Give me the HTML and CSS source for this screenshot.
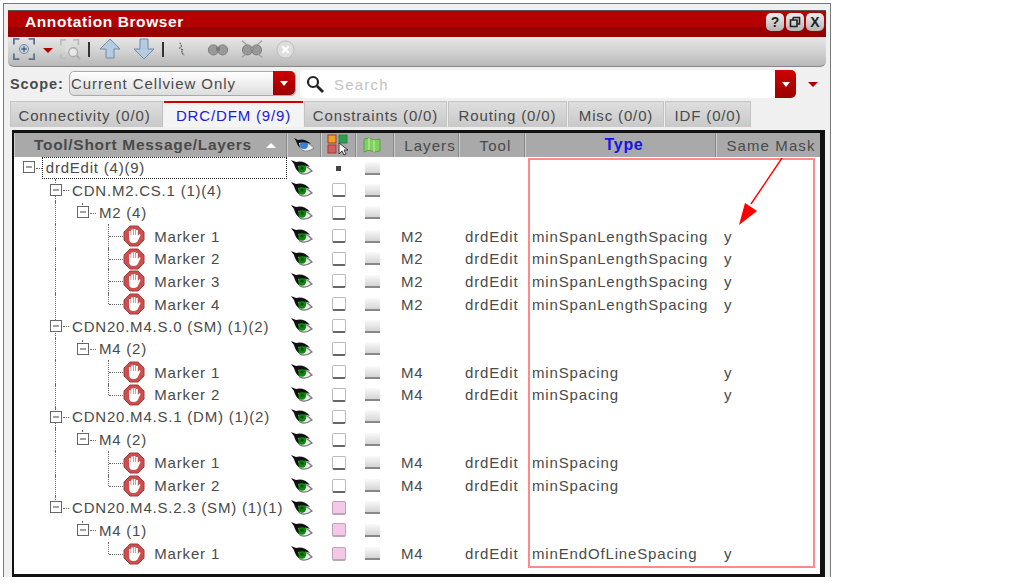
FILE: index.html
```html
<!DOCTYPE html>
<html>
  <head>
    <meta charset="UTF-8" />
    <title>Annotation Browser</title>
    <link rel="stylesheet" href="styles.css">
  </head>
  <body>
    <svg class="defs" width="0" height="0">
      <symbol id="eye" viewBox="0 0 22 16">
        <path d="M5 5 Q13 3 21 11 Q14 16 9 13 Q6 10 5 5Z" fill="#eee" stroke="#777" stroke-width="1.2"/>
        <circle cx="11" cy="8.5" r="4.2" fill="#0a8a0a"/>
        <circle cx="11" cy="8" r="1.6" fill="#034a03"/>
        <path d="M0 0 L5 2 Q13 0 19 7 Q12 4 7 6 L8 12 Q4 9 3 4Z" fill="#111"/>
      </symbol>
      <symbol id="hand" viewBox="0 0 22 22">
        <path d="M7 1 H15 L21 7 V15 L15 21 H7 L1 15 V7Z" fill="#c9504f" stroke="#a83a3a" stroke-width="1"/>
        <path d="M6 9 V6 H7.6 V10 H8.2 V4.5 H10 V10 H10.6 V4 H12.4 V10 H13 V5 H14.8 V11 L16.4 9 L17.6 10 L14.5 16.5 Q13 18 10 18 Q7 18 6.3 15Z" fill="#fff"/>
      </symbol>
      <symbol id="expander" viewBox="0 0 12 12">
        <rect x="0.5" y="0.5" width="11" height="11" fill="#fff" stroke="#666"/>
        <path d="M3 6 H9" stroke="#444" stroke-width="1"/>
      </symbol>
      <symbol id="binoculars" viewBox="0 0 24 16">
        <circle cx="7" cy="9" r="5.5" fill="#999" stroke="#777"/>
        <circle cx="17" cy="9" r="5.5" fill="#999" stroke="#777"/>
        <rect x="10" y="6" width="4" height="4" fill="#777"/>
      </symbol>
    </svg>

    <div class="window">
      <div class="titlebar">
        <span class="title">Annotation Browser</span>
        <div class="win-btns">
          <span class="win-btn">?</span>
          <span class="win-btn">
            <svg width="12" height="12" viewBox="0 0 12 12"><path d="M4 1.5 H10.5 V8 H8 M1.5 4 H8 V10.5 H1.5Z M4 1.5 V4" fill="none" stroke="#222" stroke-width="1.6"/></svg>
          </span>
          <span class="win-btn">X</span>
        </div>
      </div>

      <div class="toolbar">
        <svg class="tool first" width="22" height="22" viewBox="0 0 24 24">
          <path d="M1 7 V1 H7 M17 1 H23 V7 M23 17 V23 H17 M7 23 H1 V17" fill="none" stroke="#5a7590" stroke-width="2"/>
          <circle cx="12" cy="12" r="5" fill="#b9cde0" stroke="#6a8aa8"/>
          <path d="M12 9 V15 M9 12 H15" stroke="#334" stroke-width="1"/>
        </svg>
        <span class="drop-tri"></span>
        <svg class="tool" width="21" height="21" viewBox="0 0 24 24">
          <path d="M1 7 V1 H7 M15 1 H21 V7 M1 17 V22 H7" fill="none" stroke="#bbb" stroke-width="2"/>
          <rect x="6" y="6" width="9" height="9" fill="#ddd"/>
          <circle cx="15" cy="15" r="5" fill="#e8e8e8" stroke="#aaa" stroke-width="1.5"/>
          <path d="M19 19 L23 23" stroke="#aaa" stroke-width="2"/>
        </svg>
        <span class="tool-sep"></span>
        <svg class="tool" width="22" height="22" viewBox="0 0 22 22">
          <path d="M11 1 L21 11 H15 V20 H7 V11 H1Z" fill="#b4cbe0" stroke="#6f8ba6"/>
        </svg>
        <svg class="tool arrow-down" width="22" height="22" viewBox="0 0 22 22">
          <path d="M7 1 H15 V11 H21 L11 21 L1 11 H7Z" fill="#b4cbe0" stroke="#6f8ba6"/>
        </svg>
        <span class="tool-sep"></span>
        <svg class="tool cursor" width="9" height="16" viewBox="0 0 10 16">
          <path d="M2 1 L4 5 L2 7 L5 9 L4 12 L7 15" fill="none" stroke="#666" stroke-width="1.5" stroke-dasharray="2 1"/>
        </svg>
        <svg class="tool bino" width="22" height="16" viewBox="0 0 24 16"><use href="#binoculars"/></svg>
        <svg class="tool bino near" width="22" height="20" viewBox="0 0 24 20">
          <use href="#binoculars" y="2" width="24" height="16"/>
          <path d="M1 1 L23 19 M23 1 L1 19" stroke="#999" stroke-width="1.2"/>
        </svg>
        <svg class="tool bino" width="19" height="19" viewBox="0 0 20 20">
          <circle cx="10" cy="10" r="9" fill="#ddd" stroke="#bbb"/>
          <path d="M6.5 6.5 L13.5 13.5 M13.5 6.5 L6.5 13.5" stroke="#fff" stroke-width="2.5"/>
        </svg>
      </div>

      <div class="scope-row">
        <label class="scope-label">Scope:</label>
        <div class="combo">
          <span class="combo-text">Current Cellview Only</span>
          <span class="red-btn"><i></i></span>
        </div>
        <div class="search">
          <svg width="20" height="20" viewBox="0 0 20 20">
            <circle cx="8" cy="8" r="5" fill="none" stroke="#222" stroke-width="2.2"/>
            <path d="M12 12 L18 18" stroke="#222" stroke-width="2.8"/>
          </svg>
          <span class="search-text">Search</span>
          <span class="red-btn tall"><i></i></span>
        </div>
        <span class="drop-tri far"></span>
      </div>

      <div class="tabs">
        <span class="tab w-conn">Connectivity (0/0)</span>
        <span class="tab active w-drc">DRC/DFM (9/9)</span>
        <span class="tab w-cons">Constraints (0/0)</span>
        <span class="tab w-rout">Routing (0/0)</span>
        <span class="tab w-misc">Misc (0/0)</span>
        <span class="tab w-idf">IDF (0/0)</span>
      </div>

      <div class="panel">
        <div class="head">
          <span class="hcell tree-head">Tool/Short Message/Layers<i class="sort"></i></span>
          <span class="hcell center">
            <svg width="22" height="16" viewBox="0 0 22 16">
              <path d="M5 5 Q13 3 21 11 Q14 16 9 13 Q6 10 5 5Z" fill="#eee" stroke="#888"/>
              <circle cx="11" cy="8" r="4" fill="#3a7fd8"/>
              <path d="M1 1 L5 3 Q12 1 18 7 Q11 4 6 6 L7 11 Q4 8 3 4Z" fill="#111"/>
            </svg>
          </span>
          <span class="hcell center">
            <svg width="22" height="22" viewBox="0 0 22 22">
              <rect x="1" y="1" width="8" height="8" fill="#f0a020" stroke="#a33"/>
              <rect x="12" y="1" width="8" height="8" fill="#2f9e44" stroke="#286"/>
              <rect x="1" y="11" width="8" height="8" fill="#d06060" stroke="#a33"/>
              <path d="M12 9 V20 L15 17 L17 21 L19 20 L17 16 L21 16Z" fill="#fff" stroke="#333"/>
            </svg>
          </span>
          <span class="hcell center flag-head">
            <svg width="18" height="16" viewBox="0 0 18 16">
              <path d="M1 2 L6 1 L11 3 L17 2 V14 L11 15 L6 13 L1 15Z" fill="#7fd060" stroke="#5aa045"/>
              <path d="M6 1 V13 M11 3 V15" stroke="#c8f0b0"/>
            </svg>
          </span>
          <span class="hcell center label">Layers</span>
          <span class="hcell center label">Tool</span>
          <span class="hcell center label sorted">Type</span>
          <span class="hcell center label last">Same Mask</span>
        </div>

        <div class="row">
          <span class="tree selected"><i class="ind"><svg class="exp"><use href="#expander"/></svg></i><b class="node">drdEdit (4)(9)</b></span>
          <span class="icon eye-cell"><svg class="eye"><use href="#eye"/></svg></span><span class="icon"><i class="dot"></i></span><span class="icon flat-cell"><i class="flat"></i></span>
          <span></span><span></span><span></span><span></span>
        </div>
        <div class="row">
          <span class="tree"><i class="ind"></i><i class="ind vline"><svg class="exp"><use href="#expander"/></svg></i><b class="node">CDN.M2.CS.1 (1)(4)</b></span>
          <span class="icon eye-cell"><svg class="eye"><use href="#eye"/></svg></span><span class="icon"><i class="box"></i></span><span class="icon flat-cell"><i class="flat"></i></span>
          <span></span><span></span><span></span><span></span>
        </div>
        <div class="row">
          <span class="tree"><i class="ind"></i><i class="ind vline"></i><i class="ind tick"><svg class="exp"><use href="#expander"/></svg></i><b class="node">M2 (4)</b></span>
          <span class="icon eye-cell"><svg class="eye"><use href="#eye"/></svg></span><span class="icon"><i class="box"></i></span><span class="icon flat-cell"><i class="flat"></i></span>
          <span></span><span></span><span></span><span></span>
        </div>
        <div class="row">
          <span class="tree"><i class="ind"></i><i class="ind vline"></i><i class="ind"></i><i class="ind vline elbow"></i><svg class="hand"><use href="#hand"/></svg><b class="leaf">Marker 1</b></span>
          <span class="icon eye-cell"><svg class="eye"><use href="#eye"/></svg></span><span class="icon"><i class="box"></i></span><span class="icon flat-cell"><i class="flat"></i></span>
          <span>M2</span><span>drdEdit</span><span class="type">minSpanLengthSpacing</span><span class="mask">y</span>
        </div>
        <div class="row">
          <span class="tree"><i class="ind"></i><i class="ind vline"></i><i class="ind"></i><i class="ind vline elbow"></i><svg class="hand"><use href="#hand"/></svg><b class="leaf">Marker 2</b></span>
          <span class="icon eye-cell"><svg class="eye"><use href="#eye"/></svg></span><span class="icon"><i class="box"></i></span><span class="icon flat-cell"><i class="flat"></i></span>
          <span>M2</span><span>drdEdit</span><span class="type">minSpanLengthSpacing</span><span class="mask">y</span>
        </div>
        <div class="row">
          <span class="tree"><i class="ind"></i><i class="ind vline"></i><i class="ind"></i><i class="ind vline elbow"></i><svg class="hand"><use href="#hand"/></svg><b class="leaf">Marker 3</b></span>
          <span class="icon eye-cell"><svg class="eye"><use href="#eye"/></svg></span><span class="icon"><i class="box"></i></span><span class="icon flat-cell"><i class="flat"></i></span>
          <span>M2</span><span>drdEdit</span><span class="type">minSpanLengthSpacing</span><span class="mask">y</span>
        </div>
        <div class="row">
          <span class="tree"><i class="ind"></i><i class="ind vline"></i><i class="ind"></i><i class="ind vline elbow end"></i><svg class="hand"><use href="#hand"/></svg><b class="leaf">Marker 4</b></span>
          <span class="icon eye-cell"><svg class="eye"><use href="#eye"/></svg></span><span class="icon"><i class="box"></i></span><span class="icon flat-cell"><i class="flat"></i></span>
          <span>M2</span><span>drdEdit</span><span class="type">minSpanLengthSpacing</span><span class="mask">y</span>
        </div>
        <div class="row">
          <span class="tree"><i class="ind"></i><i class="ind vline"><svg class="exp"><use href="#expander"/></svg></i><b class="node">CDN20.M4.S.0 (SM) (1)(2)</b></span>
          <span class="icon eye-cell"><svg class="eye"><use href="#eye"/></svg></span><span class="icon"><i class="box"></i></span><span class="icon flat-cell"><i class="flat"></i></span>
          <span></span><span></span><span></span><span></span>
        </div>
        <div class="row">
          <span class="tree"><i class="ind"></i><i class="ind vline"></i><i class="ind tick"><svg class="exp"><use href="#expander"/></svg></i><b class="node">M4 (2)</b></span>
          <span class="icon eye-cell"><svg class="eye"><use href="#eye"/></svg></span><span class="icon"><i class="box"></i></span><span class="icon flat-cell"><i class="flat"></i></span>
          <span></span><span></span><span></span><span></span>
        </div>
        <div class="row">
          <span class="tree"><i class="ind"></i><i class="ind vline"></i><i class="ind"></i><i class="ind vline elbow"></i><svg class="hand"><use href="#hand"/></svg><b class="leaf">Marker 1</b></span>
          <span class="icon eye-cell"><svg class="eye"><use href="#eye"/></svg></span><span class="icon"><i class="box"></i></span><span class="icon flat-cell"><i class="flat"></i></span>
          <span>M4</span><span>drdEdit</span><span class="type">minSpacing</span><span class="mask">y</span>
        </div>
        <div class="row">
          <span class="tree"><i class="ind"></i><i class="ind vline"></i><i class="ind"></i><i class="ind vline elbow end"></i><svg class="hand"><use href="#hand"/></svg><b class="leaf">Marker 2</b></span>
          <span class="icon eye-cell"><svg class="eye"><use href="#eye"/></svg></span><span class="icon"><i class="box"></i></span><span class="icon flat-cell"><i class="flat"></i></span>
          <span>M4</span><span>drdEdit</span><span class="type">minSpacing</span><span class="mask">y</span>
        </div>
        <div class="row">
          <span class="tree"><i class="ind"></i><i class="ind vline"><svg class="exp"><use href="#expander"/></svg></i><b class="node">CDN20.M4.S.1 (DM) (1)(2)</b></span>
          <span class="icon eye-cell"><svg class="eye"><use href="#eye"/></svg></span><span class="icon"><i class="box"></i></span><span class="icon flat-cell"><i class="flat"></i></span>
          <span></span><span></span><span></span><span></span>
        </div>
        <div class="row">
          <span class="tree"><i class="ind"></i><i class="ind vline"></i><i class="ind tick"><svg class="exp"><use href="#expander"/></svg></i><b class="node">M4 (2)</b></span>
          <span class="icon eye-cell"><svg class="eye"><use href="#eye"/></svg></span><span class="icon"><i class="box"></i></span><span class="icon flat-cell"><i class="flat"></i></span>
          <span></span><span></span><span></span><span></span>
        </div>
        <div class="row">
          <span class="tree"><i class="ind"></i><i class="ind vline"></i><i class="ind"></i><i class="ind vline elbow"></i><svg class="hand"><use href="#hand"/></svg><b class="leaf">Marker 1</b></span>
          <span class="icon eye-cell"><svg class="eye"><use href="#eye"/></svg></span><span class="icon"><i class="box"></i></span><span class="icon flat-cell"><i class="flat"></i></span>
          <span>M4</span><span>drdEdit</span><span class="type">minSpacing</span><span class="mask"></span>
        </div>
        <div class="row">
          <span class="tree"><i class="ind"></i><i class="ind vline"></i><i class="ind"></i><i class="ind vline elbow end"></i><svg class="hand"><use href="#hand"/></svg><b class="leaf">Marker 2</b></span>
          <span class="icon eye-cell"><svg class="eye"><use href="#eye"/></svg></span><span class="icon"><i class="box"></i></span><span class="icon flat-cell"><i class="flat"></i></span>
          <span>M4</span><span>drdEdit</span><span class="type">minSpacing</span><span class="mask"></span>
        </div>
        <div class="row">
          <span class="tree"><i class="ind"></i><i class="ind vline end"><svg class="exp"><use href="#expander"/></svg></i><b class="node">CDN20.M4.S.2.3 (SM) (1)(1)</b></span>
          <span class="icon eye-cell"><svg class="eye"><use href="#eye"/></svg></span><span class="icon"><i class="box pink"></i></span><span class="icon flat-cell"><i class="flat"></i></span>
          <span></span><span></span><span></span><span></span>
        </div>
        <div class="row">
          <span class="tree"><i class="ind"></i><i class="ind"></i><i class="ind tick"><svg class="exp"><use href="#expander"/></svg></i><b class="node">M4 (1)</b></span>
          <span class="icon eye-cell"><svg class="eye"><use href="#eye"/></svg></span><span class="icon"><i class="box pink"></i></span><span class="icon flat-cell"><i class="flat"></i></span>
          <span></span><span></span><span></span><span></span>
        </div>
        <div class="row">
          <span class="tree"><i class="ind"></i><i class="ind"></i><i class="ind"></i><i class="ind vline elbow end"></i><svg class="hand"><use href="#hand"/></svg><b class="leaf">Marker 1</b></span>
          <span class="icon eye-cell"><svg class="eye"><use href="#eye"/></svg></span><span class="icon"><i class="box pink"></i></span><span class="icon flat-cell"><i class="flat"></i></span>
          <span>M4</span><span>drdEdit</span><span class="type">minEndOfLineSpacing</span><span class="mask">y</span>
        </div>

        <!-- callout drawn on top of the table -->
        <div class="callout-box"></div>
        <svg class="callout-arrow" width="70" height="70" viewBox="0 0 70 70">
          <path d="M48 0 L17 46" stroke="#f00" stroke-width="1.4"/>
          <path d="M5 67 L11 45 L23 53Z" fill="#f00"/>
        </svg>
      </div>
    </div>
  </body>
</html>
```

FILE: styles.css
```css
* {
  box-sizing: border-box;
}
body {
  margin: 0;
  background-color: #fff;
  font-family: "Liberation Sans", Arial, sans-serif;
  font-size: 15px;
  color: #4a4a4a;
}
.defs {
  position: absolute;
}
.window {
  width: 828px;
  height: 574px;
  margin: 3px 0 0 3px;
  padding: 6px 4px 0 4px;
  border: 1px solid #777;
  border-bottom: none;
  background-color: #f0f0f0;
}

/* title bar */
.titlebar {
  display: flex;
  align-items: center;
  justify-content: space-between;
  height: 27px;
  padding: 0 2px 5px 17px;
  border-top: 1px solid #555;
  background: linear-gradient(#b50000 0, #b50000 62%, #970000 62%, #970000 100%);
}
.title {
  color: #fff;
  font-weight: bold;
  font-size: 15.5px;
  letter-spacing: 0.6px;
}
.win-btns {
  display: flex;
  gap: 2px;
}
.win-btn {
  display: flex;
  align-items: center;
  justify-content: center;
  width: 18px;
  height: 18px;
  border-radius: 5px;
  background: linear-gradient(#eee, #b5b5b5);
  color: #222;
  font-weight: bold;
  font-size: 14px;
}

/* toolbar */
.toolbar {
  display: flex;
  align-items: center;
  height: 30px;
  padding: 0 0 5px 5px;
  border-bottom: 1px solid #888;
  border-radius: 0 0 6px 6px;
  background: linear-gradient(#e6e6e6, #d2d2d2 50%, #b8b8b8);
}
.tool {
  flex: none;
}
.drop-tri {
  width: 0;
  height: 0;
  margin: 2px 7px 0 8px;
  border-left: 5px solid transparent;
  border-right: 5px solid transparent;
  border-top: 5px solid #b00000;
}
.drop-tri.far {
  margin: 0 0 0 12px;
}
.tool-sep {
  width: 2px;
  height: 15px;
  margin: 0 9px 0 7px;
  background-color: #333;
}
.arrow-down {
  margin-left: 12px;
}
.tool-sep + .cursor {
  margin-left: 5px;
}
.bino {
  margin-left: 20px;
}
.bino.near {
  margin-left: 12px;
}
.bino.near + .bino {
  margin-left: 13px;
}

/* scope row */
.scope-row {
  display: flex;
  align-items: center;
  height: 28px;
  margin-top: 3px;
  padding-left: 2px;
}
.scope-label {
  width: 59px;
  padding-bottom: 1px;
  font-weight: bold;
  font-size: 14.5px;
  letter-spacing: 0.9px;
}
.combo {
  display: flex;
  align-items: center;
  justify-content: space-between;
  width: 227px;
  height: 25px;
  margin-bottom: 2px;
  padding-left: 1px;
  border: 1px solid #aaa;
  border-radius: 5px;
  background: linear-gradient(#fff, #ddd);
}
.combo-text {
  letter-spacing: 0.95px;
  white-space: nowrap;
}
.red-btn {
  display: flex;
  align-items: center;
  justify-content: center;
  width: 22px;
  height: 24px;
  border-radius: 0 5px 5px 0;
  background: linear-gradient(#d00000, #9a0000);
}
.red-btn i {
  width: 0;
  height: 0;
  border-left: 4px solid transparent;
  border-right: 4px solid transparent;
  border-top: 5px solid #fff;
}
.search {
  display: flex;
  align-items: center;
  width: 496px;
  height: 28px;
  margin-left: 4px;
  padding-left: 5px;
  background-color: #fff;
  border-radius: 4px;
}
.search-text {
  flex: 1;
  margin-left: 9px;
  color: #c4c4c4;
  letter-spacing: 1.2px;
}
.red-btn.tall {
  width: 21px;
  height: 28px;
}

/* tabs */
.tabs {
  display: flex;
  height: 26px;
  margin-top: 3px;
  padding-left: 2px;
  gap: 1px;
}
.tab {
  display: flex;
  align-items: center;
  justify-content: center;
  height: 26px;
  padding-top: 2px;
  border: 1px solid #c4c4c4;
  border-bottom: none;
  background: linear-gradient(#dedede, #c9c9c9);
  letter-spacing: 0.85px;
  white-space: nowrap;
}
.tab.active {
  border: none;
  border-top: 2px solid #d00000;
  padding-top: 1px;
  background: #f4f4f4;
  color: #1a1ae0;
}
.w-conn { width: 153px; padding-right: 4px; }
.w-drc { width: 139px; }
.w-cons { width: 143px; }
.w-rout { width: 119px; }
.w-misc { width: 96px; }
.w-idf { width: 86px; }

/* table */
.panel {
  position: relative;
  width: 813px;
  height: 447px;
  margin: 3px 0 0 4px;
  border-style: solid;
  border-color: #111;
  border-width: 3px 5px 3px 2px;
  background-color: #fff;
}
.head,
.row {
  display: grid;
  grid-template-columns: 273px 34px 35px 38px 65px 66px 191px 102px;
}
.head {
  height: 24px;
  background-color: #a9a9a9;
}
.hcell {
  display: flex;
  align-items: center;
  border-right: 1px solid #888;
  box-shadow: inset 1px 0 0 #ccc;
  letter-spacing: 1.1px;
  white-space: nowrap;
  overflow: hidden;
}
.hcell.center {
  justify-content: center;
}
.hcell.label {
  padding-left: 8px;
}
.hcell.last {
  border-right: none;
}
.flag-head {
  padding-right: 6px;
}
.tree-head {
  padding-left: 20px;
  font-weight: bold;
  font-size: 15.5px;
  letter-spacing: 0.7px;
}
.sort {
  width: 0;
  height: 0;
  margin-left: 14px;
  border-left: 5px solid transparent;
  border-right: 5px solid transparent;
  border-bottom: 5px solid #fff;
}
.sorted {
  color: #1414e6;
  font-weight: bold;
  font-size: 16px;
  letter-spacing: 0.7px;
}
.row {
  height: 22.7px;
  padding-bottom: 2px;
  align-items: center;
  letter-spacing: 0.85px;
  white-space: nowrap;
}
.row > span:nth-child(5) {
  padding-left: 7px;
}
.row > span:nth-child(6) {
  padding-left: 6px;
}
.row > .type {
  padding-left: 7px;
}
.row > .mask {
  padding-left: 8px;
}
.icon {
  display: flex;
  justify-content: center;
}
.eye-cell {
  padding-right: 4px;
}
.flat-cell {
  padding-right: 6px;
}

/* tree column */
.tree {
  display: flex;
  align-items: center;
  height: 100%;
  padding-left: 1px;
  letter-spacing: 0.78px;
}
.tree b {
  font-weight: normal;
}
.ind {
  position: relative;
  flex: none;
  display: block;
  width: 26.8px;
  height: 100%;
}
.vline::before {
  content: "";
  position: absolute;
  left: 13px;
  top: -1px;
  bottom: -3px;
  border-left: 1px dotted #666;
}
.vline.end::before {
  bottom: 50%;
}
.tick::before {
  content: "";
  position: absolute;
  left: 13px;
  top: 1px;
  height: 4px;
  border-left: 1px dotted #666;
}
.elbow::after {
  content: "";
  position: absolute;
  left: 14px;
  top: 50%;
  width: 14px;
  border-top: 1px dotted #666;
}
.ind:has(> .exp)::after {
  content: "";
  position: absolute;
  left: 21px;
  top: 50%;
  width: 6px;
  border-top: 1px dotted #666;
}
.exp {
  position: absolute;
  left: 8px;
  top: 4px;
  width: 12px;
  height: 12px;
}
.node {
  margin-left: 3.5px;
}
.selected .node {
  flex: 1;
  height: 22px;
  margin-left: 0;
  padding-left: 3px;
  line-height: 20px;
  border: 1px dotted #222;
}
.hand {
  flex: none;
  width: 22px;
  height: 22px;
  margin-left: 1px;
}
.leaf {
  margin-left: 9px;
  letter-spacing: 0.85px;
}
.eye {
  width: 22px;
  height: 16px;
}
.box {
  display: block;
  width: 14px;
  height: 14px;
  border: 1px solid #bbb;
  border-bottom: 2px solid #666;
  border-radius: 2px;
  background-color: #fff;
}
.box.pink {
  border-color: #b9a5b4;
  background-color: #f5c8ea;
}
.dot {
  display: block;
  width: 5px;
  height: 5px;
  background-color: #444;
}
.flat {
  display: block;
  width: 15px;
  height: 13px;
  border-bottom: 2px solid #888;
  background: linear-gradient(#fafafa, #d5d5d5);
}

/* callout */
.callout-box {
  position: absolute;
  left: 514px;
  top: 25px;
  width: 287px;
  height: 410px;
  border: 2px solid #f88;
}
.callout-arrow {
  position: absolute;
  left: 720px;
  top: 25px;
}
```
